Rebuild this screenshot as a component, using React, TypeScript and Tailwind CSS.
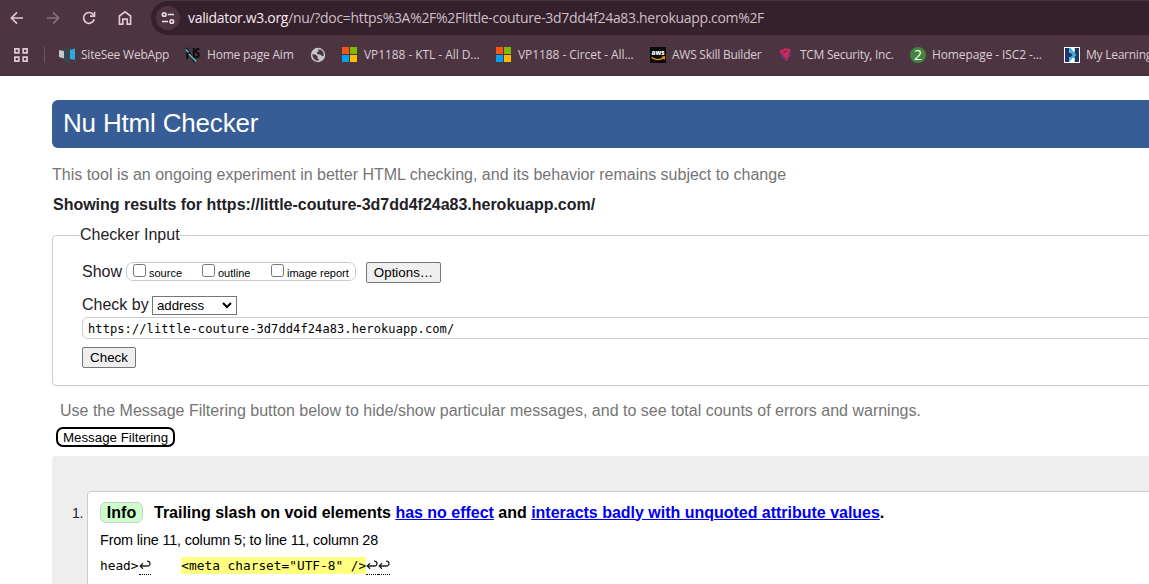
import type { ReactNode } from "react";

function BackIcon() {
  return (
    <svg width="14" height="14" viewBox="0 0 14 14" fill="none" stroke="#e3c5d4" strokeWidth="1.7">
      <path d="M13 7H1.8M7 1.4L1.4 7L7 12.6" />
    </svg>
  );
}

function ForwardIcon() {
  return (
    <svg width="14" height="14" viewBox="0 0 14 14" fill="none" stroke="#86707c" strokeWidth="1.7">
      <path d="M1 7h11.2M7 1.4L12.6 7L7 12.6" />
    </svg>
  );
}

function ReloadIcon() {
  return (
    <svg width="14" height="14" viewBox="0 0 14 14" fill="none" stroke="#e3c5d4" strokeWidth="1.7">
      <path d="M12.2 8.3A5.4 5.4 0 1 1 11.2 3.5L12.4 4.9" />
      <path d="M12.5 0.8V5.2H8" />
    </svg>
  );
}

function HomeIcon() {
  return (
    <svg width="14" height="16" viewBox="0 0 14 16" fill="none" stroke="#e3c5d4" strokeWidth="1.7">
      <path d="M1.4 14.2V6L7 1.8L12.6 6V14.2H9.2V9.2H4.8V14.2Z" />
    </svg>
  );
}

function TuneIcon() {
  return (
    <svg width="14" height="14" viewBox="0 0 14 14" fill="none" stroke="#ecdfe6" strokeWidth="1.6">
      <circle cx="3.2" cy="3.5" r="1.8" />
      <path d="M6.8 3.5H13M1 10.5H7" />
      <circle cx="10.8" cy="10.5" r="1.8" />
    </svg>
  );
}

function AppsIcon() {
  return (
    <svg width="14" height="14" viewBox="0 0 14 14" fill="none" stroke="#dccdd4" strokeWidth="1.7">
      <path d="M0.9 0.9h3.9v3.9h-3.9zM9.2 0.9h3.9v3.9h-3.9zM0.9 9.2h3.9v3.9h-3.9zM9.2 9.2h3.9v3.9h-3.9z" />
    </svg>
  );
}

function SiteSeeIcon() {
  return (
    <svg width="16" height="16" viewBox="0 0 16 16">
      <path d="M0 3L5 4V11.5L0 10Z" fill="#c3c9cd" />
      <path d="M5 2L11 0V16L5 14Z" fill="#37474f" />
      <path d="M11 3L16 1.5V13L11 12Z" fill="#29abe2" />
    </svg>
  );
}

function NsIcon() {
  return (
    <svg width="16" height="16" viewBox="0 0 16 16" fill="none">
      <path d="M2.3 12V3L8.8 13V1" stroke="#0c0c10" strokeWidth="2" />
      <path d="M14.3 2.5C11.5 0.8 9.7 4.5 12 5.6C15.4 7 13.7 11.3 10 9.8" stroke="#0c0c10" strokeWidth="1.9" />
      <path d="M1 2.5L3.5 5.5M4 7L11.2 14.5" stroke="#51c5cc" strokeWidth="1.5" />
    </svg>
  );
}

function GlobeIcon() {
  return (
    <svg width="16" height="16" viewBox="0 0 16 16">
      <circle cx="8" cy="8" r="7.2" fill="#c6c6cb" />
      <path d="M2.2 7.2L5.5 7.6L7.8 9.8L7.4 11.4L9 12.3L8 14C4.6 13.4 2.4 11 2.2 7.2Z" fill="#4c3541" />
      <path d="M8.2 2.2L11.4 3L13.4 5.4L13.8 8.8L12 9.2L10.3 7.6L7.6 7.2L6.6 5.2L8.6 4.6Z" fill="#4c3541" />
    </svg>
  );
}

function MicrosoftIcon() {
  return (
    <svg width="16" height="16" viewBox="0 0 16 16" shapeRendering="crispEdges">
      <rect x="0" y="0" width="7" height="7" fill="#f65314" />
      <rect x="8" y="0" width="7" height="7" fill="#7cbb00" />
      <rect x="0" y="8" width="7" height="7" fill="#00a1f1" />
      <rect x="8" y="8" width="7" height="7" fill="#ffbb00" />
    </svg>
  );
}

function AwsIcon() {
  return (
    <svg width="16" height="16" viewBox="0 0 16 16">
      <rect width="16" height="16" fill="#080a0c" />
      <text x="8" y="8.2" textAnchor="middle" fontFamily="Open Sans, sans-serif" fontWeight="800" fontSize="7" textLength="13" lengthAdjust="spacingAndGlyphs" fill="#fff">aws</text>
      <path d="M1.5 10.2C5 13.2 10 13.3 13.4 11M11.8 10.1L14.6 10L14 12.5" fill="none" stroke="#f79400" strokeWidth="1.3" />
    </svg>
  );
}

function TcmIcon() {
  return (
    <svg width="16" height="16" viewBox="0 0 16 16">
      <path d="M2 3L7 1L13 3L13.4 7.5C12.7 11 10.5 13 8 14.6C5 12.5 2.6 9.8 2.4 5Z" fill="#5a3477" />
      <path d="M1.5 3.8L7.6 1.2L13 2.4L11 5.6L10.8 9L9 13L7.4 13.8L7.6 10.5L4 9L6 7.2L2.4 6.6Z" fill="#cf2a52" />
      <path d="M4.4 4.8L9.8 3.2L7.2 6Z" fill="#702341" />
    </svg>
  );
}

function IscIcon() {
  return (
    <svg width="16" height="16" viewBox="0 0 16 16">
      <circle cx="8" cy="8" r="8" fill="#43853d" />
      <text x="8" y="13" textAnchor="middle" fontFamily="Open Sans, sans-serif" fontSize="14" fill="#fff">2</text>
    </svg>
  );
}

function LearningIcon() {
  return (
    <svg width="16" height="16" viewBox="0 0 16 16">
      <rect width="16" height="16" fill="#fff" />
      <path d="M1 1H5V15H1ZM10.5 1H15V15H10.5Z" fill="#21356b" />
      <path d="M5 5.5H10.5V10.5H5Z" fill="#21356b" />
      <path d="M5 1H6.5L12.5 8L8.5 11L5 15L5 11.8L8.5 8L5 4Z" fill="#36b5d8" />
      <path d="M7.5 1H10.5V5ZM10.5 10.5V15H6Z" fill="#fff" />
    </svg>
  );
}

function Bookmark({ icon, width, children }: { icon: ReactNode; width: string; children?: ReactNode }) {
  return (
    <div className={`flex h-4 shrink-0 items-center gap-1.5 whitespace-nowrap ${width}`}>
      <span className="w-4 shrink-0">{icon}</span>
      {children}
    </div>
  );
}

function BrowserBar() {
  return (
    <header className="h-[76px] overflow-hidden border-b border-[#443039] bg-[#4c3541] font-['Open_Sans','Noto_Sans',sans-serif]">
      <div className="flex h-[35px] items-center pt-px pl-[10px]">
        <div className="flex w-[141px] shrink-0 items-center gap-[22px]">
          <BackIcon />
          <ForwardIcon />
          <ReloadIcon />
          <HomeIcon />
        </div>
        <div className="flex h-[34px] w-[1100px] shrink-0 items-center rounded-l-full bg-[#35212c] pl-[5px]">
          <span className="flex size-6 shrink-0 items-center justify-center rounded-full bg-[#4c3541]">
            <TuneIcon />
          </span>
          <span className="ml-2 text-sm tracking-[-0.32px] whitespace-nowrap text-[#cdbfc7]">
            <span className="text-[#f5e9f0]">validator.w3.org</span>
            /nu/?doc=https%3A%2F%2Flittle-couture-3d7dd4f24a83.herokuapp.com%2F
          </span>
        </div>
      </div>
      <div className="flex h-10 items-center pl-[14px] text-xs text-[#d9cdd3]">
        <span className="w-[30px] shrink-0"><AppsIcon /></span>
        <span className="mr-[14px] h-4 w-px shrink-0 bg-[#6b5561]" />
        <Bookmark width="w-[126px]" icon={<SiteSeeIcon />}><span className="tracking-[-0.22px]">SiteSee WebApp</span></Bookmark>
        <Bookmark width="w-[125px]" icon={<NsIcon />}><span className="tracking-[-0.2px]">Home page Aim</span></Bookmark>
        <Bookmark width="w-[32px]" icon={<GlobeIcon />} />
        <Bookmark width="w-[154px]" icon={<MicrosoftIcon />}><span className="tracking-[-0.07px]">VP1188 - KTL - All D...</span></Bookmark>
        <Bookmark width="w-[154px]" icon={<MicrosoftIcon />}><span className="tracking-[-0.07px]">VP1188 - Circet - All...</span></Bookmark>
        <Bookmark width="w-[128px]" icon={<AwsIcon />}><span className="tracking-[-0.25px]">AWS Skill Builder</span></Bookmark>
        <Bookmark width="w-[132px]" icon={<TcmIcon />}><span className="tracking-[-0.28px]">TCM Security, Inc.</span></Bookmark>
        <Bookmark width="w-[154px]" icon={<IscIcon />}><span className="tracking-[-0.11px]">Homepage - ISC2 -...</span></Bookmark>
        <Bookmark width="w-[120px]" icon={<LearningIcon />}><span className="tracking-[-0.25px]">My Learning</span></Bookmark>
      </div>
    </header>
  );
}

function Check({ label, width }: { label: string; width: string }) {
  return (
    <label className={`flex shrink-0 items-start whitespace-nowrap ${width}`}>
      <input type="checkbox" className="mt-[1px] size-[13px] shrink-0 appearance-none rounded-[2.5px] border border-[#767676] bg-white" />
      <span className="ml-[3px] pt-[3px] text-[11px] leading-[14px] text-black">{label}</span>
    </label>
  );
}

function CheckerForm() {
  return (
    <fieldset className="mt-[10px] h-[161px] w-[1200px] rounded-[4px] border border-[#ccc] pl-[29px] text-base text-[#1f2126]">
      <legend className="-ml-[2px] h-5 leading-5">Checker Input</legend>
      <div className="mt-[17px] flex h-5 items-center">
        <span className="w-11 shrink-0 leading-5">Show</span>
        <div className="flex h-[19px] w-[230px] -translate-y-px items-start rounded-[7px] border border-[#ccc] pl-[6px]">
          <Check label="source" width="w-[69px]" />
          <Check label="outline" width="w-[69px]" />
          <Check label="image report" width="w-[86px]" />
        </div>
        <button className="ml-[10px] h-[21px] w-[75px] rounded-[2px] border border-[#767676] bg-[#efefef] text-[13.33px] leading-[19px] text-black">Options…</button>
      </div>
      <div className="mt-[13px] flex h-5 items-center">
        <span className="w-[70px] shrink-0 leading-5">Check by</span>
        <button className="flex h-[19px] w-[85px] items-center justify-between border border-[#767676] bg-white pr-[4px] pl-1 text-[13.33px] leading-[17px] text-black">
          <span className="tracking-[-0.05px]">address</span>
          <svg width="10" height="7" viewBox="0 0 10 7" fill="none" stroke="#000" strokeWidth="2">
            <path d="M1 1L5 5L9 1" />
          </svg>
        </button>
      </div>
      <div className="mt-[2px] flex h-[22px] w-[1140px] items-center rounded-[6px] border border-[#ccc] bg-white pl-[5px] font-['DejaVu_Sans_Mono',monospace] text-[12px] tracking-[0.1px] text-black">
        <span className="pt-0.5">https://little-couture-3d7dd4f24a83.herokuapp.com/</span>
      </div>
      <button className="mt-2 block h-[21px] w-[54px] rounded-[2px] border border-[#767676] bg-[#efefef] text-[13.33px] leading-[19px] text-black">Check</button>
    </fieldset>
  );
}

function ReturnMark() {
  return (
    <span className="flex h-[18px] w-3 items-start border-b border-dotted border-black pt-[3px]">
      <svg width="12" height="10" viewBox="0 0 12 10" fill="none" stroke="#222" strokeWidth="1.3">
        <path d="M4 3.2L1.2 6L4 8.8M1.2 6H8.2C12 6 12 1.2 8 1.2" />
      </svg>
    </span>
  );
}

function Results() {
  return (
    <div className="mt-[9px] h-[200px] w-[1200px] rounded-tl-[4px] bg-[#eee] pt-[35px]">
      <div className="flex">
        <span className="w-[35px] shrink-0 pt-[12px] pl-5 text-sm leading-5 tracking-[-0.4px] text-[#1f2126]">1.</span>
        <div className="h-[200px] grow rounded-tl-[4px] border border-[#ccc] bg-white pl-3 text-black">
          <div className="mt-[10px] flex h-[21px] items-center text-base font-bold whitespace-nowrap">
            <span className="mr-[11px] flex h-[21px] w-[43px] shrink-0 items-center justify-center rounded-[6px] border border-[#ccc] bg-[#cfc]">Info</span>
            <span className="tracking-[-0.015px]">
              Trailing slash on void elements{" "}
              <a className="text-[#00e] underline">has no effect</a> and{" "}
              <a className="text-[#00e] underline">interacts badly with unquoted attribute values</a>.
            </span>
          </div>
          <p className="mt-[7px] h-5 text-[14.4px] leading-5 tracking-[-0.155px]">From line 11, column 5; to line 11, column 28</p>
          <code className="mt-[7px] flex h-[20px] items-start font-['DejaVu_Sans_Mono',monospace] text-[12.8px] leading-[17px] whitespace-pre">
            <span>head&gt;</span>
            <ReturnMark />
            <span>{"    "}</span>
            <mark className="bg-[#ffff80] text-black">{'<meta charset="UTF-8" />'}</mark>
            <ReturnMark />
            <ReturnMark />
          </code>
        </div>
      </div>
    </div>
  );
}

export default function App() {
  return (
    <div className="h-[584px] w-full overflow-hidden bg-white font-['Liberation_Sans',Arial,sans-serif]">
      <BrowserBar />
      <main className="pt-6 pl-[52px]">
        <h1 className="h-12 w-[1200px] rounded-[6px] bg-[#365d95] pl-[11px] text-[26px] leading-[47px] tracking-[-0.18px] text-white">Nu Html Checker</h1>
        <p className="mt-[17px] h-5 text-base leading-5 text-[#757575]">This tool is an ongoing experiment in better HTML checking, and its behavior remains subject to change</p>
        <h2 className="mt-[10px] ml-px h-5 text-base leading-5 font-bold tracking-[-0.015px] text-[#1f2126]">Showing results for https://little-couture-3d7dd4f24a83.herokuapp.com/</h2>
        <CheckerForm />
        <p className="mt-[15px] ml-2 h-5 text-base leading-5 text-[#757575]">Use the Message Filtering button below to hide/show particular messages, and to see total counts of errors and warnings.</p>
        <button className="mt-[6px] ml-1 block h-[20px] w-[119px] rounded-[7px] border-2 border-black bg-white text-[13.33px] leading-[15px] whitespace-nowrap text-black">Message Filtering</button>
        <Results />
      </main>
    </div>
  );
}
